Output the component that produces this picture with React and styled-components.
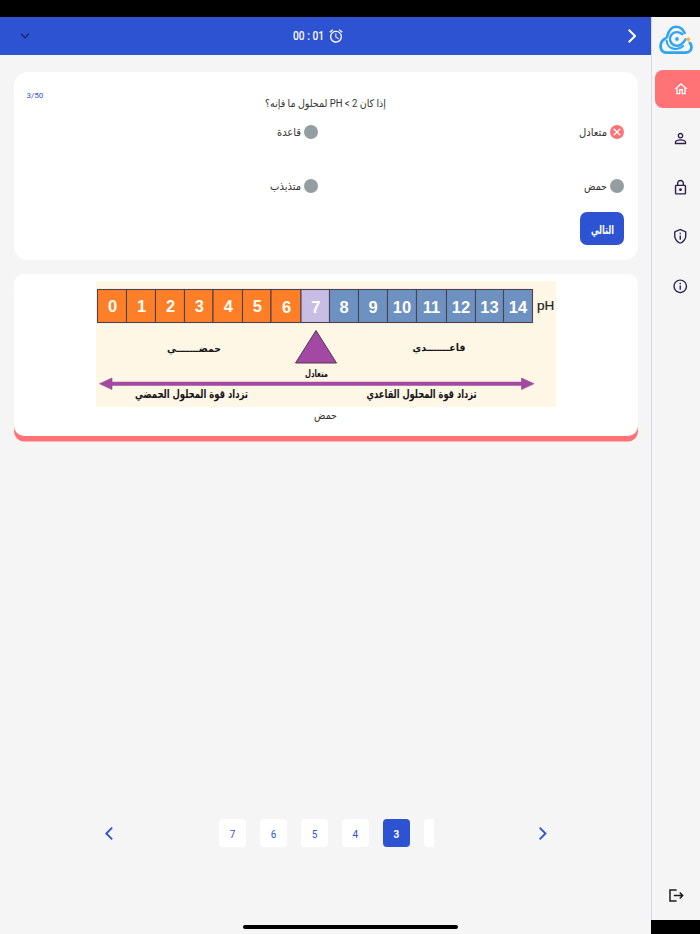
import React, { useState } from 'react';
import styled, { createGlobalStyle, css } from 'styled-components';
import {
    MdAlarm,
    MdInfoOutline,
    MdOutlineHome,
    MdOutlineLock,
    MdOutlinePrivacyTip,
    MdPersonOutline,
} from 'react-icons/md';

const colors = {
    primary: '#2d53d3',
    danger: '#ff7377',
    background: '#f5f5f5',
    ink: '#2b2250',
    text: '#333333',
    grey: '#949ea0',
    border: '#d3dce6',
};

const menu = [
    { id: 'home', Icon: MdOutlineHome, size: 16 },
    { id: 'profile', Icon: MdPersonOutline, size: 17 },
    { id: 'password', Icon: MdOutlineLock, size: 17 },
    { id: 'privacy', Icon: MdOutlinePrivacyTip, size: 16.5 },
    { id: 'about', Icon: MdInfoOutline, size: 16.5 },
];

const answers = [
    { id: 1, label: 'متعادل', wrong: true, width: 28 },
    { id: 2, label: 'قاعدة', width: 24 },
    { id: 3, label: 'حمض', width: 23 },
    { id: 4, label: 'متذبذب', width: 31 },
];

const pages = [3, 4, 5, 6, 7];

// left edges of the scale cells, the last one closes the scale
const edges = [1.5, 30.5, 59.5, 88.5, 117, 146.5, 175, 205, 233.5, 262.5, 291.5, 320.5, 350.5, 379.5, 407.5, 436.5];

const cellColor = (n) => {
    if (n < 7) return '#fe7f27';
    if (n === 7) return '#c8bde5';
    return '#6d91c1';
};

const Chevron = ({ flip, size = 13, width = 1.7 }) => (
    <svg width={size * 0.6} height={size} viewBox="0 0 7.2 12" fill="none" stroke="currentColor" strokeWidth={width}>
        <path d={flip ? 'M6.6 .6 1.2 6l5.4 5.4' : 'M.6 .6 6 6 .6 11.4'} />
    </svg>
);

const Logo = () => (
    <svg width="34" height="30" viewBox="0 0 34 30" fill="none" stroke="#2fa4f5" strokeLinecap="round">
        <path d="M7.8 12.5C9.2 6.5 12.4 1.8 17 1.8c3.9 0 6.9 2.4 8.6 6.2" strokeWidth="2.6" />
        <path d="M6 13.6C2.6 15.8 1.3 18.6 1.6 21.8c.4 3.8 3 5.8 6.4 5.8h18.4c3.7 0 6.1-2.4 6.1-5.6 0-1.7-.6-3-1.6-4" strokeWidth="2.8" />
        <path d="M23.2 9.2c-3.2-3-8.1-2.8-10.8.5-2.6 3.3-1.6 8.2 2 10.2 4.6 2.5 8.9-.4 12.2-5.6" strokeWidth="2.4" />
        <path d="M7.6 15.8c.4 4.2 3.6 7.5 7.6 8.1 3.3.5 6.4-.5 9-2.9" strokeWidth="2.1" />
        <circle cx="18" cy="14" r="1.9" fill="#2fa4f5" stroke="none" />
        <path d="m29.3 12 2.3 2.3-2.3 2.4-2.4-2.4z" fill="#ffb52e" stroke="none" />
    </svg>
);

const LogoutIcon = () => (
    <svg width="15" height="13" viewBox="0 0 15 13" fill="none" stroke="#1c1c1c" strokeWidth="1.5">
        <path d="M7.6 1H1v11h6.6M4.8 6.5h8.5M10.7 3.5l3 3-3 3" />
    </svg>
);

const FitText = ({ width, size = 11, weight = 400, fill = colors.text, dir = 'rtl', children }) => (
    <svg width={width} height="18" overflow="visible" direction={dir}>
        <text
            x={dir === 'rtl' ? width : 0}
            y="13"
            fontSize={size}
            fontWeight={weight}
            fill={fill}
            textLength={width}
            lengthAdjust="spacingAndGlyphs"
        >
            {children}
        </text>
    </svg>
);

const ScaleChart = () => (
    <ChartSvg width="460" height="126" viewBox="0 0 460 126" direction="ltr">
        <rect width="460" height="126" fill="#fef7e5" />
        {edges.slice(0, 15).map((x, n) => (
            <g key={n}>
                <rect
                    x={x}
                    y="8.5"
                    width={edges[n + 1] - x}
                    height="33"
                    fill={cellColor(n)}
                    stroke="#4b4350"
                    strokeWidth="1.1"
                />
                <text
                    x={(x + edges[n + 1]) / 2 + (n > 7 ? 0 : 0.6)}
                    y={n < 6 ? 31 : 31.5}
                    textAnchor="middle"
                    fontSize="16.5"
                    fontWeight="700"
                    fill="#fffdf5"
                >
                    {n}
                </text>
            </g>
        ))}
        <text x="441" y="29" fontSize="13.5" fill="#222" stroke="#222" strokeWidth=".2">pH</text>

        <path d="M220 49.5 240.5 82h-41z" fill="#a349a4" stroke="#4b3a50" />

        <ChartLabel x="98" y="70.5" textLength="54">حمضـــــــي</ChartLabel>
        <ChartLabel x="343" y="69.5" textLength="53">قاعـــــــدي</ChartLabel>
        <ChartLabel x="220.5" y="96" textLength="23">متعادل</ChartLabel>

        <path d="M12 102.7h416" stroke="#a349a4" strokeWidth="4" />
        <path d="M3.5 102.7 16 97v11.6zM438 102.7l-12.5-5.7v11.6z" fill="#a349a4" stroke="#8d4b90" strokeWidth=".6" />

        <ChartLabel x="95.5" y="116.5" textLength="113" $big>تزداد قوة المحلول الحمضي</ChartLabel>
        <ChartLabel x="325.5" y="116.5" textLength="110" $big>تزداد قوة المحلول القاعدي</ChartLabel>
    </ChartSvg>
);

const App = () => {
    const [current, setCurrent] = useState(3);

    return (
        <>
            <GlobalStyle />
            <Screen dir="rtl">
                <StatusBar />
                <Body>
                    <Sidebar>
                        <LogoBox><Logo /></LogoBox>
                        <Menu>
                            {menu.map(({ id, Icon, size }) => (
                                <MenuItem key={id} $active={id === 'home'}>
                                    <Icon size={size} />
                                </MenuItem>
                            ))}
                        </Menu>
                        <Logout><LogoutIcon /></Logout>
                        <SidebarFooter />
                    </Sidebar>

                    <Main>
                        <Header>
                            <Chevron size={14} />
                            <Timer>
                                <MdAlarm size={16} />
                                <FitText width={31} size={12} weight={500} fill="#fff" dir="ltr">00 : 01</FitText>
                            </Timer>
                            <Collapse>
                                <svg width="10" height="6" viewBox="0 0 10 6" fill="none" stroke="currentColor" strokeWidth="1.3">
                                    <path d="m1 .8 4 4 4-4" />
                                </svg>
                            </Collapse>
                        </Header>

                        <Content>
                            <QuestionCard>
                                <Counter dir="ltr">3/50</Counter>
                                <Question>
                                    <FitText width={121} size={10.5}>إذا كان 2 &gt; PH لمحلول ما فإنه؟</FitText>
                                </Question>
                                <Answers>
                                    {answers.map((answer) => (
                                        <Answer key={answer.id}>
                                            <Bullet $wrong={answer.wrong}>
                                                {answer.wrong && (
                                                    <svg width="8" height="8" viewBox="0 0 8 8" stroke="#fff" strokeWidth="1.3">
                                                        <path d="m.7.7 6.6 6.6M7.3.7.7 7.3" />
                                                    </svg>
                                                )}
                                            </Bullet>
                                            <FitText width={answer.width}>{answer.label}</FitText>
                                        </Answer>
                                    ))}
                                </Answers>
                                <NextButton>
                                    <FitText width={23} size={12} weight={700} fill="#fff">التالي</FitText>
                                </NextButton>
                            </QuestionCard>

                            <ResultCard>
                                <ScaleChart />
                                <FitText width={23}>حمض</FitText>
                            </ResultCard>
                        </Content>

                        <Pagination>
                            <Arrow><Chevron /></Arrow>
                            <Pages>
                                <PageStub />
                                {pages.map((page) => (
                                    <Page key={page} $active={page === current} onClick={() => setCurrent(page)}>
                                        {page}
                                    </Page>
                                ))}
                            </Pages>
                            <Arrow><Chevron flip /></Arrow>
                        </Pagination>
                        <HomeIndicator />
                    </Main>
                </Body>
            </Screen>
        </>
    );
};

export default App;

// styled-components
const GlobalStyle = createGlobalStyle`
  * {
    box-sizing: border-box;
  }

  body {
    margin: 0;
    background: ${colors.background};
    font-family: Roboto, 'DejaVu Sans', sans-serif;
    color: ${colors.text};
  }

  svg {
    display: block;
    flex-shrink: 0;
  }

  button {
    border: none;
    padding: 0;
    font-family: inherit;
    cursor: pointer;
  }
`;

const Screen = styled.div`
  display: flex;
  flex-direction: column;
  width: 700px;
  height: 934px;
  overflow: hidden;
`;

const StatusBar = styled.div`
  height: 16.5px;
  flex-shrink: 0;
  background: #000;
`;

const Body = styled.div`
  display: flex;
  flex: 1;
  min-height: 0;
`;

const Sidebar = styled.aside`
  display: flex;
  flex-direction: column;
  width: 49px;
  flex-shrink: 0;
  border-left: 1px solid ${colors.border};
`;

const LogoBox = styled.div`
  padding: 8.5px 7px 0 0;
  height: 53.5px;
`;

const Menu = styled.nav`
  display: flex;
  flex-direction: column;
  gap: 11px;
`;

const MenuItem = styled.a`
  display: flex;
  align-items: center;
  justify-content: center;
  height: 38.2px;
  margin-left: 3px;
  padding-left: 6px;
  color: ${colors.ink};

  ${({ $active }) => $active && css`
    color: #fff;
    background: ${colors.danger};
    border-radius: 8px 0 0 8px;
  `}
`;

const Logout = styled.div`
  margin-top: auto;
  height: 31px;
  padding-right: 16.5px;
`;

const SidebarFooter = styled.div`
  height: 14px;
  margin-left: -1px;
  background: #000;
`;

const Main = styled.main`
  display: flex;
  flex-direction: column;
  flex: 1;
  min-width: 0;
`;

const Header = styled.header`
  display: grid;
  grid-template-columns: 40px 1fr 40px;
  align-items: center;
  height: 38.5px;
  padding: 0 15px 0 20px;
  color: #fff;
  background: ${colors.primary};
`;

const Timer = styled.div`
  display: flex;
  align-items: center;
  justify-content: center;
  gap: 4px;
  padding-right: 19px;
`;

const Collapse = styled.div`
  justify-self: end;
  color: #14275f;
`;

const Content = styled.div`
  display: flex;
  flex-direction: column;
  gap: 14px;
  padding: 17px 13.5px 0 14px;
`;

const Card = styled.section`
  background: #fff;
  border-radius: 14px;
`;

const QuestionCard = styled(Card)`
  height: 188px;
  padding: 17px 13.5px 0 12.5px;
`;

const Counter = styled.div`
  height: 5px;
  font-size: 8px;
  line-height: 13px;
  text-align: left;
  color: ${colors.primary};
`;

const Question = styled.h1`
  display: flex;
  justify-content: center;
  height: 18px;
  margin: 0;
`;

const Answers = styled.div`
  display: grid;
  grid-template-columns: 306px 1fr;
  row-gap: 35.5px;
  margin-top: 11px;
`;

const Answer = styled.label`
  display: flex;
  align-items: center;
  gap: 3px;
  height: 18px;
`;

const Bullet = styled.span`
  display: flex;
  align-items: center;
  justify-content: center;
  width: 14px;
  height: 14px;
  border-radius: 50%;
  background: ${({ $wrong }) => ($wrong ? colors.danger : colors.grey)};
`;

const NextButton = styled.button`
  display: flex;
  align-items: center;
  justify-content: center;
  width: 44px;
  height: 33px;
  margin-top: 17.5px;
  padding-top: 3px;
  border-radius: 7px;
  background: ${colors.primary};
`;

const ResultCard = styled(Card)`
  display: flex;
  flex-direction: column;
  align-items: center;
  height: 161.5px;
  padding-top: 7px;
  border-radius: 10px;
  box-shadow: 0 5.5px 0 ${colors.danger};

  > svg:last-child {
    margin-top: -1px;
  }
`;

const ChartSvg = styled.svg`
  font-family: 'Liberation Sans', 'DejaVu Sans', sans-serif;
`;

const ChartLabel = styled.text.attrs({ textAnchor: 'middle', lengthAdjust: 'spacingAndGlyphs' })`
  font-family: 'DejaVu Sans', sans-serif;
  font-size: ${({ $big }) => ($big ? '11.5px' : '10px')};
  font-weight: 700;
  fill: #17151a;
`;

const Pagination = styled.nav`
  display: flex;
  align-items: center;
  justify-content: space-between;
  width: 442px;
  height: 28px;
  margin: auto 104px 77.5px 0;
`;

const Arrow = styled.button`
  display: flex;
  background: none;
  color: ${colors.primary};
`;

const Pages = styled.div`
  display: flex;
  gap: 13.7px;
  width: 215.5px;
  margin-left: 1px;
`;

const Page = styled.button`
  width: 27.3px;
  height: 27.3px;
  flex-shrink: 0;
  padding-top: 3px;
  border-radius: 4px;
  font-size: 10px;
  color: ${({ $active }) => ($active ? '#fff' : colors.primary)};
  background: ${({ $active }) => ($active ? colors.primary : '#fff')};
  font-weight: ${({ $active }) => ($active ? 700 : 400)};
`;

const PageStub = styled.span`
  width: 10.5px;
  height: 27.3px;
  flex-shrink: 0;
  border-radius: 4px 0 0 4px;
  background: #fff;
`;

const HomeIndicator = styled.div`
  width: 215px;
  height: 4px;
  flex-shrink: 0;
  align-self: flex-start;
  margin: 0 193.5px 5.5px 0;
  border-radius: 2px;
  background: #000;
`;
